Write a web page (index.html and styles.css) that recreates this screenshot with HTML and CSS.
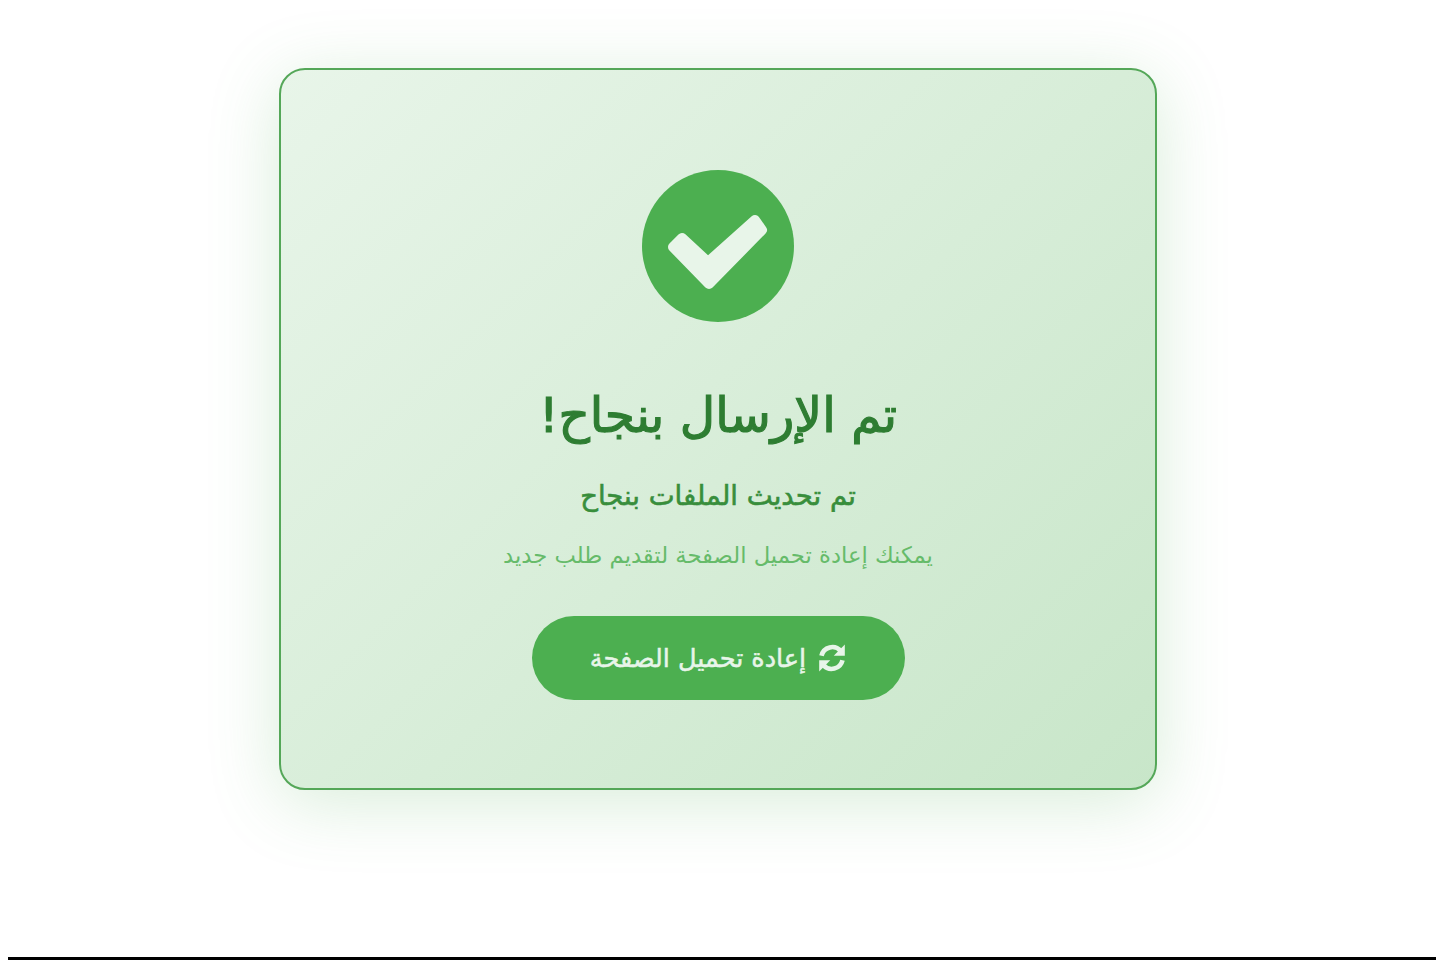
FILE: index.html
```html
<!DOCTYPE html>
<html lang="ar" dir="rtl">
<head>
  <meta charset="utf-8">
  <title>تم الإرسال بنجاح</title>
  <link rel="stylesheet" href="styles.css">
</head>
<body>
  <div class="success-wrapper">
    <div class="success-card">
      <!-- Check icon -->
      <div class="success-icon">
        <svg viewBox="0 0 152 152" width="152" height="152">
          <path d="M31 77 L40 68 L66 92 L113 50 L120 60 L67 114 Z" fill="#e8f5e9" stroke="#e8f5e9" stroke-width="10" stroke-linejoin="round"/>
        </svg>
      </div>
      <h1 class="success-title">تم الإرسال بنجاح!</h1>
      <p class="success-subtitle">تم تحديث الملفات بنجاح</p>
      <p class="success-note">يمكنك إعادة تحميل الصفحة لتقديم طلب جديد</p>
      <button class="reload-btn" type="button">
        <svg class="reload-icon" viewBox="2 2 24 24" width="28" height="28">
          <path d="M5 12 A9.5 9.5 0 0 1 21.5 8" fill="none" stroke="#e8f5e9" stroke-width="4"/>
          <path d="M25 2.5 V12 H15.5 Z" fill="#e8f5e9"/>
          <path d="M23 16 A9.5 9.5 0 0 1 6.5 20" fill="none" stroke="#e8f5e9" stroke-width="4"/>
          <path d="M3 25.5 V16 H12.5 Z" fill="#e8f5e9"/>
        </svg>
        <span>إعادة تحميل الصفحة</span>
      </button>
    </div>
  </div>
  <div class="page-line"></div>
</body>
</html>
```

FILE: styles.css
```css
* {
  margin: 0;
  padding: 0;
  box-sizing: border-box;
}

html,
body {
  height: 100%;
}

body {
  background: #fff;
  font-family: "DejaVu Sans", "Noto Sans", sans-serif;
  display: flex;
  flex-direction: column;
  overflow: hidden;
}

.success-wrapper {
  flex: 1;
  display: flex;
  justify-content: center;
  padding-top: 68px;
}

.success-card {
  width: 878px;
  height: 722px;
  padding-top: 100px;
  display: flex;
  flex-direction: column;
  align-items: center;
  text-align: center;
  background: linear-gradient(135deg, #e8f5e9 0%, #c8e6c9 100%);
  border: 2px solid #54a758;
  border-radius: 26px;
  box-shadow: 0 12px 70px rgba(76, 175, 80, 0.22);
}

.success-icon {
  width: 152px;
  height: 152px;
  border-radius: 50%;
  background: #4caf50;
  margin-bottom: 54px;
}

.success-icon svg {
  display: block;
}

.success-title {
  font-size: 48.7px;
  line-height: 78px;
  font-weight: 400;
  -webkit-text-stroke: 1.2px #2e7d32;
  color: #2e7d32;
  margin-bottom: 18px;
}

.success-subtitle {
  font-size: 27.5px;
  line-height: 46px;
  font-weight: 400;
  -webkit-text-stroke: 0.6px #388e3c;
  color: #388e3c;
  margin-bottom: 18px;
}

.success-note {
  font-size: 22.7px;
  line-height: 38px;
  color: #66bb6a;
  margin-bottom: 42px;
}

.reload-btn {
  width: 373px;
  height: 84px;
  display: flex;
  align-items: center;
  justify-content: center;
  gap: 12px;
  border: none;
  border-radius: 42px;
  background: #4caf50;
  color: #e8f5e9;
  font-family: inherit;
  font-size: 25.5px;
  font-weight: 400;
  -webkit-text-stroke: 0.5px #e8f5e9;
}

.page-line {
  height: 3px;
  margin-left: 8px;
  background: #000;
}
```
